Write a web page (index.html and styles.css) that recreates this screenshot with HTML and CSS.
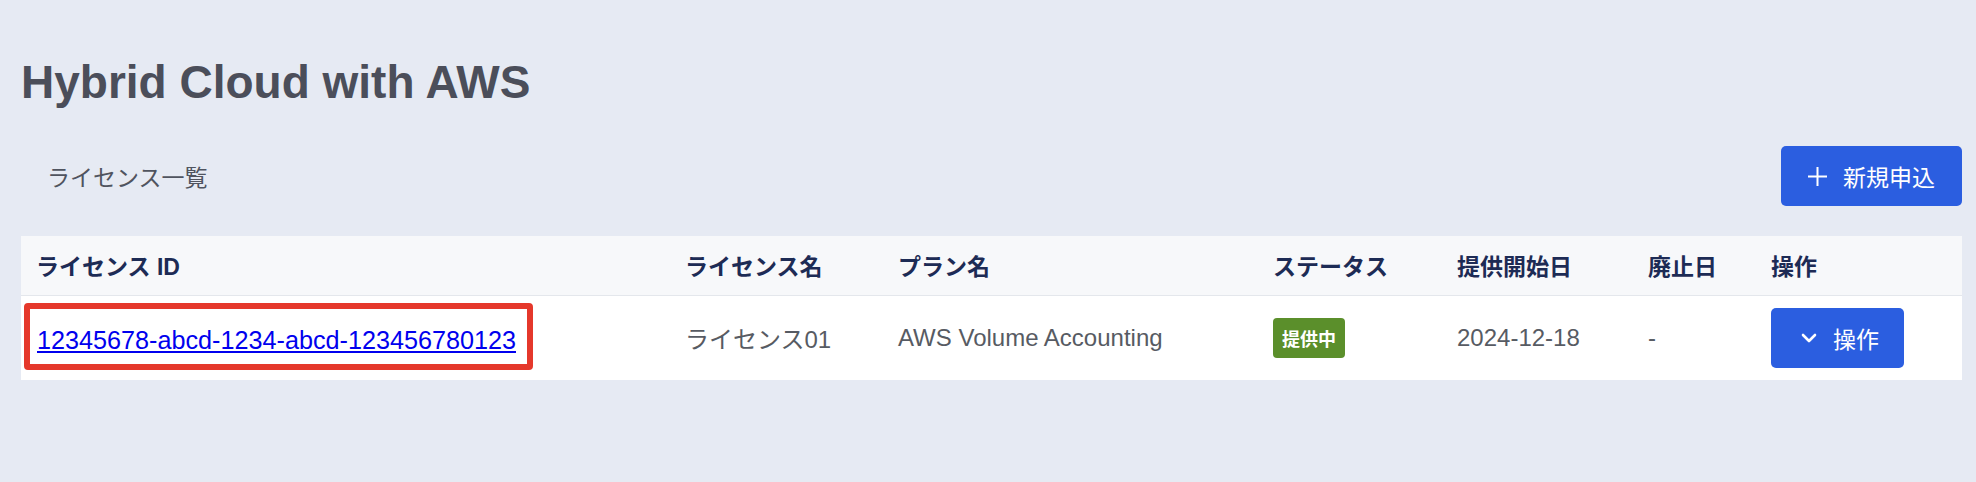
FILE: index.html
```html
<!DOCTYPE html>
<html lang="ja">
<head>
<meta charset="utf-8">
<title>Hybrid Cloud with AWS</title>
<link rel="stylesheet" href="styles.css">
</head>
<body>
<main class="page">
  <h1 class="title">Hybrid Cloud with AWS</h1>
  <div class="toolbar">
    <span class="section">ライセンス一覧</span>
    <button class="btn btn-new" type="button">
      <svg class="ico-plus" width="21" height="21" viewBox="0 0 21 21" aria-hidden="true"><path d="M10.5 1v19M1 10.5h19" stroke="#fff" stroke-width="2" fill="none"/></svg>
      <span>新規申込</span>
    </button>
  </div>
  <table class="grid">
    <colgroup>
      <col class="c1"><col class="c2"><col class="c3"><col class="c4"><col class="c5"><col class="c6"><col class="c7">
    </colgroup>
    <thead>
      <tr>
        <th>ライセンス ID</th>
        <th>ライセンス名</th>
        <th>プラン名</th>
        <th>ステータス</th>
        <th>提供開始日</th>
        <th>廃止日</th>
        <th>操作</th>
      </tr>
    </thead>
    <tbody>
      <tr>
        <td class="idcell"><span class="mark"><a class="idlink" href="#">12345678-abcd-1234-abcd-123456780123</a></span></td>
        <td class="jp">ライセンス01</td>
        <td class="plan">AWS Volume Accounting</td>
        <td><span class="badge">提供中</span></td>
        <td class="num">2024-12-18</td>
        <td class="num">-</td>
        <td>
          <button class="btn btn-ops" type="button">
            <svg class="ico-chev" width="16" height="10" viewBox="0 0 16 10" aria-hidden="true"><path d="M2 2l6 6 6-6" stroke="#fff" stroke-width="2.6" fill="none" stroke-linecap="round" stroke-linejoin="round"/></svg>
            <span>操作</span>
          </button>
        </td>
      </tr>
    </tbody>
  </table>
</main>
</body>
</html>
```

FILE: styles.css
```css
* { box-sizing: border-box; }

html, body {
  margin: 0;
  background: #e6eaf3;
}

body {
  font-family: "Liberation Sans", "Noto Sans CJK JP", sans-serif;
  color: #555a66;
}

.page {
  padding: 54px 14px 0 21px;
}

.title {
  margin: 0;
  font-family: "Liberation Sans", "Noto Sans CJK JP", sans-serif;
  font-weight: 700;
  font-size: 46px;
  line-height: 56px;
  color: #4b4e5a;
}

.toolbar {
  display: flex;
  justify-content: space-between;
  align-items: center;
  margin-top: 36px;
  height: 60px;
}

.section {
  padding-left: 26px;
  font-family: "Noto Sans CJK JP", sans-serif;
  font-size: 23px;
  color: #50545f;
}

.btn {
  display: inline-flex;
  align-items: center;
  border: 0;
  border-radius: 5px;
  background: #2b5ee0;
  color: #fff;
  font-family: "Noto Sans CJK JP", sans-serif;
  font-size: 23px;
  font-weight: 400;
  cursor: pointer;
}

.btn-new {
  width: 181px;
  height: 60px;
  padding: 0 0 0 26px;
  gap: 15px;
}

.btn-ops {
  width: 133px;
  height: 60px;
  padding: 0 0 0 30px;
  gap: 16px;
}

.ico-plus, .ico-chev { flex: none; display: block; }

.grid {
  margin-top: 30px;
  width: 100%;
  border-collapse: collapse;
  table-layout: fixed;
}

.c1 { width: 649px; }
.c2 { width: 213px; }
.c3 { width: 375px; }
.c4 { width: 184px; }
.c5 { width: 191px; }
.c6 { width: 123px; }
.c7 { width: 206px; }

.grid th {
  height: 59px;
  padding: 0 16px 0 15px;
  background: #f7f8fa;
  border-bottom: 1px solid #e4e7ec;
  text-align: left;
  font-family: "Liberation Sans", "Noto Sans CJK JP", sans-serif;
  font-weight: 700;
  font-size: 23px;
  color: #1d2b55;
  white-space: nowrap;
}

.grid td {
  height: 85px;
  padding: 0 16px 0 15px;
  background: #fff;
  font-size: 24px;
  color: #575b63;
  vertical-align: middle;
  white-space: nowrap;
}

.grid td.idcell {
  padding-left: 3px;
}

.mark {
  display: inline-block;
  border: 6px solid #e5382b;
  border-radius: 4px;
  padding: 16px 11px 8px 7px;
  line-height: 30px;
  margin-top: -3px;
}

.idlink {
  color: #0000ee;
  font-size: 25.2px;
  text-decoration: underline;
}

.jp {
  font-size: 23px;
}

.plan {
  font-size: 23.6px;
}

.num {
  font-size: 25px;
}

.badge {
  display: inline-block;
  height: 40px;
  line-height: 40px;
  padding: 0 9px;
  border-radius: 4px;
  background: #5b8f2b;
  color: #fff;
  font-family: "Noto Sans CJK JP", sans-serif;
  font-weight: 700;
  font-size: 18px;
}
```
